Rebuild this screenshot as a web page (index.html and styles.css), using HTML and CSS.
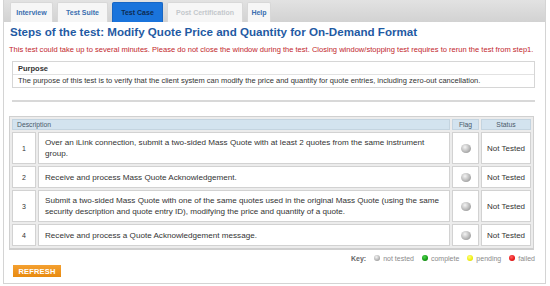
FILE: index.html
```html
<!DOCTYPE html>
<html lang="en">
<head>
    <meta charset="UTF-8">
    <title>Test Case</title>
    <link rel="stylesheet" href="styles.css">
</head>
<body>
    <div class="frame">
        <div class="tabs">
            <a class="tab tab-interview">Interview</a>
            <a class="tab tab-suite">Test Suite</a>
            <a class="tab tab-active">Test Case</a>
            <a class="tab tab-disabled">Post Certification</a>
            <a class="tab tab-help">Help</a>
        </div>
        <div class="content">
            <h1 class="title">Steps of the test: Modify Quote Price and Quantity for On-Demand Format</h1>
            <p class="warning">This test could take up to several minutes. Please do not close the window during the test. Closing window/stopping test requires to rerun the test from step1.</p>

            <div class="purpose">
                <div class="purpose-head">Purpose</div>
                <div class="purpose-body">The purpose of this test is to verify that the client system can modify the price and quantity for quote entries, including zero-out cancellation.</div>
            </div>

            <hr class="divider">

            <table class="steps">
                <thead>
                    <tr>
                        <th colspan="2" class="th-desc">Description</th>
                        <th class="th-flag">Flag</th>
                        <th class="th-status">Status</th>
                    </tr>
                </thead>
                <tbody>
                    <tr class="row-tall">
                        <td class="num">1</td>
                        <td class="desc">Over an iLink connection, submit a two-sided Mass Quote with at least 2 quotes from the same instrument group.</td>
                        <td class="flag"><span class="dot dot-grey"></span></td>
                        <td class="status">Not Tested</td>
                    </tr>
                    <tr>
                        <td class="num">2</td>
                        <td class="desc">Receive and process Mass Quote Acknowledgement.</td>
                        <td class="flag"><span class="dot dot-grey"></span></td>
                        <td class="status">Not Tested</td>
                    </tr>
                    <tr class="row-tall">
                        <td class="num">3</td>
                        <td class="desc">Submit a two-sided Mass Quote with one of the same quotes used in the original Mass Quote (using the same security description and quote entry ID), modifying the price and quantity of a quote.</td>
                        <td class="flag"><span class="dot dot-grey"></span></td>
                        <td class="status">Not Tested</td>
                    </tr>
                    <tr>
                        <td class="num">4</td>
                        <td class="desc">Receive and process a Quote Acknowledgement message.</td>
                        <td class="flag"><span class="dot dot-grey"></span></td>
                        <td class="status">Not Tested</td>
                    </tr>
                </tbody>
            </table>

            <div class="key">
                <b>Key:</b>
                <span class="key-item"><span class="key-dot dot-grey"></span>not tested</span>
                <span class="key-item"><span class="key-dot dot-green"></span>complete</span>
                <span class="key-item"><span class="key-dot dot-yellow"></span>pending</span>
                <span class="key-item"><span class="key-dot dot-red"></span>failed</span>
            </div>

            <button type="button" class="refresh">REFRESH</button>
        </div>
    </div>
</body>
</html>
```

FILE: styles.css
```css
* {
    margin: 0;
    padding: 0;
    box-sizing: border-box;
}

body {
    background: #ffffff;
    font-family: 'Liberation Sans', Arial, sans-serif;
    color: #333333;
}

.frame {
    margin: 0 4px 0 3px;
    height: 284px;
    border: 1px solid #d4d4d4;
    border-top: none;
}

/* tab strip */
.tabs {
    height: 22px;
    background: linear-gradient(#e2e2e2, #d2d2d2);
    display: flex;
    align-items: flex-end;
    gap: 4px;
    padding-left: 6px;
}

.tab {
    height: 20px;
    display: flex;
    align-items: center;
    justify-content: center;
    padding: 0 3px;
    background: #f6f6f6;
    border: 1px solid #d8d8d8;
    border-bottom: none;
    border-radius: 2px 2px 0 0;
    color: #3a6fb0;
    font-size: 7px;
    font-weight: bold;
}

.tab-interview { width: 43px; }
.tab-suite { width: 51px; }
.tab-help { width: 24px; }

.tab-active {
    width: 51px;
    background: #1a74dc;
    border-color: #1766c4;
    color: #0d2a52;
}

.tab-disabled {
    width: 76px;
    color: #c4c8cc;
}

.content {
    padding: 0 10px 0 5px;
}

.title {
    font-size: 11.6px;
    font-weight: bold;
    color: #1f5aa3;
    line-height: 16px;
    margin: 2px 0 0 1px;
}

.warning {
    font-size: 7.55px;
    color: #c2262c;
    line-height: 10px;
    margin-top: 5px;
    white-space: nowrap;
}

.purpose {
    margin: 6px 0 0 3px;
    border: 1px solid #d6d6d6;
    font-size: 7.5px;
}

.purpose-head {
    height: 13px;
    padding: 2px 5px 0;
    font-weight: bold;
    border-bottom: 1px solid #e2e2e2;
}

.purpose-body {
    height: 12px;
    padding: 1px 5px 0;
    white-space: nowrap;
}

.divider {
    margin: 12px 0 0 3px;
    border: none;
    height: 2px;
    background: #d8d8d8;
}

/* steps table */
.steps {
    margin: 14px 0 0 0;
    width: 525px;
    border-collapse: separate;
    border-spacing: 2px;
    background: #ececec;
    border: 1px solid #d0d0d0;
    border-bottom: 2px solid #cfcfcf;
    font-size: 8.1px;
    color: #333333;
}

.steps th {
    height: 11px;
    background: #d3e3ef;
    border: 1px solid #c4d4e0;
    font-weight: normal;
    font-size: 6.8px;
    color: #4a5a6a;
}

.th-desc {
    text-align: left;
    padding-left: 4px;
}

.steps td {
    background: #ffffff;
    border: 1px solid #d2d2d2;
    height: 22px;
    vertical-align: middle;
}

.steps .row-tall td {
    height: 32px;
}

.num {
    width: 24px;
    text-align: center;
    font-size: 7px;
}

.desc {
    padding: 0 6px;
    line-height: 11px;
}

.flag {
    width: 27px;
    text-align: center;
}

.status {
    width: 50px;
    text-align: center;
    font-size: 8px;
}

.dot {
    display: inline-block;
    width: 10px;
    height: 9px;
    border-radius: 50%;
    vertical-align: middle;
}

.dot-grey {
    background: radial-gradient(circle at 40% 35%, #f4f4f4, #b8b8b8 55%, #7e7e7e);
}

.dot-green {
    background: radial-gradient(circle at 40% 35%, #4fd34f, #139a13 60%, #0a6a0a);
}

.dot-yellow {
    background: radial-gradient(circle at 40% 35%, #ffff80, #eeee10 60%, #c8c800);
}

.dot-red {
    background: radial-gradient(circle at 40% 35%, #ff6060, #e81818 60%, #b00000);
}

.key {
    display: flex;
    justify-content: flex-end;
    align-items: center;
    gap: 8px;
    margin-top: 3px;
    font-size: 7px;
    color: #8a8a8a;
    height: 10px;
}

.key b {
    color: #666666;
}

.key-item {
    display: flex;
    align-items: center;
    gap: 3px;
}

.key-dot {
    display: inline-block;
    width: 6px;
    height: 6px;
    border-radius: 50%;
}

.refresh {
    display: block;
    margin: 2px 0 0 4px;
    width: 48px;
    height: 12px;
    background: linear-gradient(#f4a030, #e88a10);
    border: none;
    color: #ffffff;
    font-family: 'Liberation Sans', Arial, sans-serif;
    font-weight: bold;
    font-size: 7.5px;
    letter-spacing: 0.2px;
}
```
